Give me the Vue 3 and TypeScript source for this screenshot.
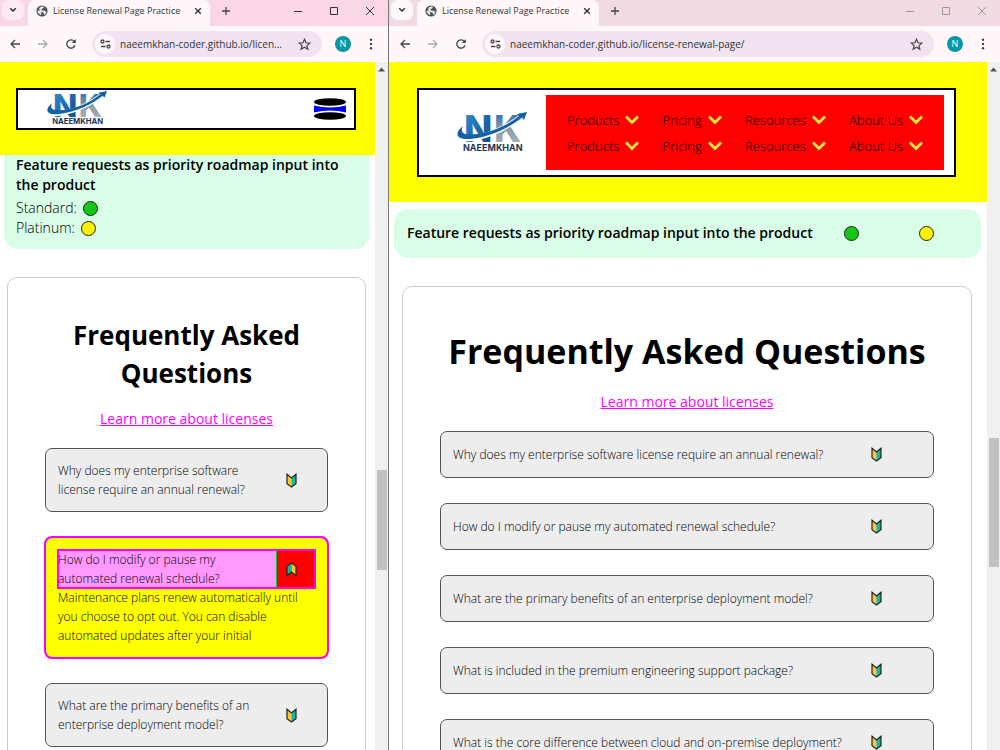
<script setup lang="ts">
import { reactive } from 'vue'

interface Faq { q: string; a?: string }
interface Win { id: string; compact: boolean; url: string; open: number | null; faqs: Faq[] }

const faqs: Faq[] = [
  { q: 'Why does my enterprise software license require an annual renewal?' },
  {
    q: 'How do I modify or pause my automated renewal schedule?',
    a: 'Maintenance plans renew automatically until you choose to opt out. You can disable automated updates after your initial',
  },
  { q: 'What are the primary benefits of an enterprise deployment model?' },
  { q: 'What is included in the premium engineering support package?' },
  { q: 'What is the core difference between cloud and on-premise deployment?' },
]
const menu = ['Products', 'Pricing', 'Resources', 'About Us']
const wins = reactive<Win[]>([
  { id: 'narrow', compact: true, url: 'naeemkhan-coder.github.io/licen...', open: 1, faqs: faqs.slice(0, 3) },
  { id: 'wide', compact: false, url: 'naeemkhan-coder.github.io/license-renewal-page/', open: null, faqs },
])
function toggle(w: Win, i: number) {
  w.open = w.open === i ? null : i
}
</script>

<template>
  <div class="desktop">
    <section v-for="w in wins" :key="w.id" class="window" :class="w.id">
      <div class="tabs">
        <button class="search" aria-label="Search tabs">
          <svg width="8" height="6" viewBox="0 0 8 6"><path d="M1.2 1.2 4 4l2.8-2.8" fill="none" stroke="#333" stroke-width="1.5" /></svg>
        </button>
        <div class="tab">
          <svg width="12" height="12" viewBox="0 0 12 12">
            <circle cx="6" cy="6" r="5.6" fill="#4d5256" />
            <path d="M1.5 5.5 4 6l1.5 1.5-.5 2.5-1.5-.8L1.8 7.5z M4.500 2l2.500-.7 1 1-1.500 1.500L5 4.500l1.500 1 2 .2 2 1-.8 2-1.500 1.300-.7-2.500-2.500-.8L3 5 3.500 3z" fill="#e8e6e8" />
          </svg>
          <span class="tab-title">License Renewal Page Practice</span>
          <button class="tab-close" aria-label="Close tab">
            <svg width="8" height="8" viewBox="0 0 8 8"><path d="m1.2 1.2 5.6 5.6m0-5.6-5.6 5.6" stroke="#333" stroke-width="1.4" /></svg>
          </button>
        </div>
        <button class="plus" aria-label="New tab">
          <svg width="10" height="10" viewBox="0 0 10 10"><path d="M5 1v8M1 5h8" stroke="#444" stroke-width="1.3" /></svg>
        </button>
        <div class="controls">
          <button aria-label="Minimize"><svg width="10" height="10" viewBox="0 0 10 10"><path d="M1 5.5h8" stroke="currentColor" /></svg></button>
          <button aria-label="Maximize"><svg width="10" height="10" viewBox="0 0 10 10"><path d="M1.5 1.5h7v7h-7z" fill="none" stroke="currentColor" /></svg></button>
          <button aria-label="Close"><svg width="10" height="10" viewBox="0 0 10 10"><path d="m1 1 8 8m0-8-8 8" stroke="currentColor" /></svg></button>
        </div>
      </div>

      <div class="toolbar">
        <button aria-label="Back"><svg width="12" height="12" viewBox="0 0 12 12"><path d="M11 6H2m4-4L2 6l4 4" fill="none" stroke="#444" stroke-width="1.3" /></svg></button>
        <button aria-label="Forward"><svg width="12" height="12" viewBox="0 0 12 12"><path d="M1 6h9M6 2l4 4-4 4" fill="none" stroke="#aaa" stroke-width="1.3" /></svg></button>
        <button aria-label="Reload">
          <svg width="12" height="12" viewBox="0 0 12 12"><path d="M10 7.2A4.2 4.2 0 1 1 9.3 3.4L10 4.3" fill="none" stroke="#444" stroke-width="1.3" /><path d="M10.8 1v4H6.8z" fill="#444" /></svg>
        </button>
        <div class="omnibox">
          <button class="tune" aria-label="Site information">
            <svg width="11" height="10" viewBox="0 0 11 10"><g fill="none" stroke="#444" stroke-width="1.3"><circle cx="2.5" cy="2.5" r="1.5" /><path d="M5.5 2.5h4.5M1 7.5h4.5" /><circle cx="8.5" cy="7.5" r="1.5" /></g></svg>
          </button>
          <input type="text" :value="w.url" aria-label="Address" />
          <button class="star" aria-label="Bookmark">
            <svg width="13" height="13" viewBox="0 0 13 13"><path d="m6.5 1.3 1.5 3.5 3.8.3-2.9 2.5.9 3.7-3.300-2-3.300 2 .9-3.700L1.200 5.100 5 4.800z" fill="none" stroke="#444" stroke-width="1.2" /></svg>
          </button>
        </div>
        <button class="avatar" aria-label="Profile">N</button>
        <button class="dots" aria-label="Menu"><svg width="4" height="12" viewBox="0 0 4 12"><g fill="#444"><circle cx="2" cy="1.7" r="1.2" /><circle cx="2" cy="6" r="1.2" /><circle cx="2" cy="10.3" r="1.2" /></g></svg></button>
      </div>

      <div class="view">
        <main class="page">
          <header class="site-header">
            <div class="brandbar">
              <svg class="logo" viewBox="0 0 70 42" role="img" aria-label="Naeemkhan">
                <defs>
                  <linearGradient :id="'n-' + w.id" x1="0" y1="0" x2="1" y2="1"><stop offset="0" stop-color="#3396d6" /><stop offset="1" stop-color="#0b3f85" /></linearGradient>
                  <linearGradient :id="'k-' + w.id" x1="0" y1="0" x2="0" y2="1"><stop offset="0.2" stop-color="#3478b4" /><stop offset="0.5" stop-color="#8d9aa8" /><stop offset="1" stop-color="#b5bbc3" /></linearGradient>
                </defs>
                <text x="7" y="30" class="mark" :fill="`url(#n-${w.id})`">N</text>
                <text x="37" y="30" class="mark" :fill="`url(#k-${w.id})`">K</text>
                <path d="M4 19C-1 27 9 28 20 25.5 37 22 52 14 65 4" fill="none" stroke="#fff" stroke-width="5" />
                <path d="M6 14C-4 22 0 28 13 27 35 24.5 53 15 65 5.5l2 2.5L70 0 60 2l2 2C49 14 34 21 15 22.5 6 23 3 20 6 14z" fill="#1460a5" />
                <text x="6" y="39" class="word">NAEEMKHAN</text>
              </svg>
              <button v-if="w.compact" class="burger" aria-label="Open menu">
                <svg width="32" height="22" viewBox="0 0 32 22"><ellipse cx="16" cy="4" rx="16" ry="3.8" /><ellipse cx="16" cy="18" rx="16" ry="3.8" /><path d="M0 7.5q16 4 32 0v7q-16-4-32 0z" fill="#00f" /></svg>
              </button>
              <nav v-else class="nav" aria-label="Main">
                <ul v-for="row in 2" :key="row">
                  <li v-for="m in menu" :key="m">
                    <a href="#">{{ m }}<svg width="14" height="10" viewBox="0 0 14 10"><path d="m1 1.5 6 6 6-6" fill="none" stroke="#ffe838" stroke-width="2.8" /></svg></a>
                  </li>
                </ul>
              </nav>
            </div>
          </header>

          <section class="feature">
            <h3>Feature requests as priority roadmap input into the product</h3>
            <p><span v-if="w.compact">Standard:</span><i class="dot green"></i></p>
            <p><span v-if="w.compact">Platinum:</span><i class="dot yellow"></i></p>
          </section>

          <section class="faq">
            <h1>Frequently Asked Questions</h1>
            <a class="more" href="#">Learn more about licenses</a>
            <article v-for="(f, i) in w.faqs" :key="f.q" class="item" :class="{ open: w.open === i }">
              <div class="question">
                <span>{{ f.q }}</span>
                <button :aria-expanded="w.open === i" :aria-label="f.q" @click="toggle(w, i)">
                  <svg width="11" height="15" viewBox="0 0 11 15"><path d="M1 1.2 5.5 5v9L1 10.8z" fill="#fdc82f" /><path d="M10 1.2 5.5 5v9L10 10.8z" fill="#12b8a0" /><path d="M1 1.2 5.5 5 10 1.2v9.6L5.5 14 1 10.8z" fill="none" stroke="#222" stroke-width="1.2" /></svg>
                </button>
              </div>
              <p v-if="w.open === i && f.a">{{ f.a }}</p>
            </article>
          </section>
        </main>
        <div class="scroll" aria-hidden="true">
          <svg width="7" height="5" viewBox="0 0 7 5"><path d="M3.5.5 7 4.5H0z" fill="#505050" /></svg>
          <div class="track"><i class="thumb"></i></div>
        </div>
      </div>
    </section>
  </div>
</template>

<style>
body { margin: 0; }
</style>

<style scoped>
* { box-sizing: border-box; }
h1, h3, p, ul { margin: 0; padding: 0; }
button { border: 0; padding: 0; background: none; color: inherit; font: inherit; display: flex; align-items: center; justify-content: center; }
svg { display: block; flex: none; }

.desktop { display: grid; grid-template-columns: 389fr 611fr; height: 100vh; overflow: hidden; background: #fff; color: #000; font-family: "Open Sans", "Noto Sans", sans-serif; }
.window { display: flex; flex-direction: column; min-width: 0; min-height: 0; }
.narrow { border-right: 1px solid #777; }

.tabs { display: flex; height: 26px; flex: none; background: #fad6e8; color: #333; }
.wide .tabs { background: #f1dae4; color: #999; }
.search { width: 22px; height: 20px; margin: 0 4px 0 2px; border-radius: 7px; background: #fdeaf3; }
.wide .search { background: #fff8fa; }
.tab { display: flex; align-items: center; width: 182px; height: 26px; padding: 0 8px 5px; border-radius: 7px 7px 0 0; background: #fff7f9; color: #333; }
.tab-title { flex: 1; margin-left: 5px; font-size: 9px; white-space: nowrap; }
.plus { width: 32px; height: 21px; }
.controls { display: flex; margin-left: auto; }
.controls button { width: 36px; height: 21px; }

.toolbar { display: flex; align-items: center; height: 36px; flex: none; padding: 0 9px 0 1px; background: #fff7f9; }
.wide .toolbar { padding-left: 2px; }
.toolbar > button { width: 28px; height: 26px; }
.omnibox { display: flex; align-items: center; flex: 1; min-width: 0; height: 26px; margin-left: 7px; padding: 0 11px 0 3px; border-radius: 13px; background: #f1e3ef; }
.tune { width: 20px; height: 20px; border-radius: 10px; background: #fff7f9; }
input { flex: 1; min-width: 0; margin-left: 5px; padding: 0; border: 0; outline: 0; background: none; color: #333; font-family: inherit; font-size: 10px; }
.toolbar > .avatar { width: 16px; height: 16px; margin: 0 12px 0 13px; border-radius: 8px; background: #0b96a3; color: #fff; font-size: 9px; line-height: 16px; }
.toolbar > .dots { width: 16px; }

.view { display: flex; flex: 1; min-height: 0; }
.page { flex: 1; min-width: 0; overflow: hidden; }
.scroll { display: flex; flex-direction: column; align-items: center; width: 13px; padding-top: 5px; background: #f0f0f0; }
.track { display: grid; flex: 1; width: 10px; grid-template-rows: 397fr 100fr 180fr; }
.wide .track { grid-template-rows: 365fr 129fr 183fr; }
.thumb { grid-row: 2; background: #c1c1c1; }

.site-header { padding: 26px 19px 25px 16px; background: #ff0; }
.wide .site-header { padding: 26px 31px 25px 28px; }
.brandbar { display: flex; align-items: center; height: 42px; padding: 0 8px 0 29px; border: 2px solid #000; background: #fff; }
.wide .brandbar { height: 89px; padding: 0 10px 0 38px; }
.logo { width: 60px; height: 36px; }
.wide .logo { width: 70px; height: 42px; }
.mark { font: 800 37px Inter, sans-serif; }
.word { font: 700 9px Inter, sans-serif; fill: #1d3557; }
.burger { margin-left: auto; }
.nav { display: flex; flex-direction: column; justify-content: center; flex: 1; height: 75px; margin-left: 19px; padding: 0 21px; background: #f00; }
.nav ul { display: flex; justify-content: space-between; list-style: none; }
.nav a { display: flex; align-items: center; gap: 6px; color: #000; font-size: 13px; font-weight: 300; line-height: 26px; text-decoration: none; }

.feature { margin: 0 6px 0 4px; padding: 0 12px 11px; border-radius: 0 0 14px 14px; background: #d9fde7; }
.feature h3 { margin-bottom: 3px; font-size: 14px; font-weight: 600; line-height: 20px; }
.feature p { display: flex; align-items: center; gap: 6px; font-size: 14px; font-weight: 300; line-height: 20px; }
.dot { width: 15px; height: 15px; border: 1px solid #222; border-radius: 8px; }
.green { background: #14c814; }
.yellow { background: #fff000; }
.wide .feature { display: flex; align-items: center; height: 49px; margin: 7px 6px 0 5px; padding: 0 47px 0 13px; border-radius: 14px; }
.wide .feature h3 { flex: 1; margin: 0; padding-bottom: 2px; }
.wide .feature p + p { margin-left: 60px; }

.faq { display: flex; flex-direction: column; align-items: center; margin: 28px 9px 0 7px; padding: 38px 37px 40px; border: 1px solid #ccc; border-radius: 10px; }
.wide .faq { margin: 28px 15px 0 13px; }
h1 { font-size: 26px; font-weight: 700; line-height: 38px; text-align: center; }
.wide h1 { font-size: 34px; line-height: 52px; }
.more { margin: 17px 0 19px; color: #f0f; font-size: 14px; line-height: 20px; }
.wide .more { margin-top: 15px; }
.item { width: 100%; margin-bottom: 25px; padding: 12px; border: 1px solid #555; border-radius: 7px; background: #ededed; font-size: 12px; font-weight: 300; line-height: 19px; color: #000; }
.question { display: flex; min-height: 21px; }
.question span { flex: 1; align-self: center; }
.question button { width: 39px; padding-right: 9px; }
.wide .question button { width: 70px; padding-right: 20px; }
.open { background: #ff0; outline: 2px solid #f0f; outline-offset: -1px; }
.open .question { background: #f9f; outline: 2px solid #f0f; outline-offset: -1px; }
.open .question button { border-left: 1px solid #0c3; background: #f00; }
.open svg { transform: rotate(180deg); }
</style>
